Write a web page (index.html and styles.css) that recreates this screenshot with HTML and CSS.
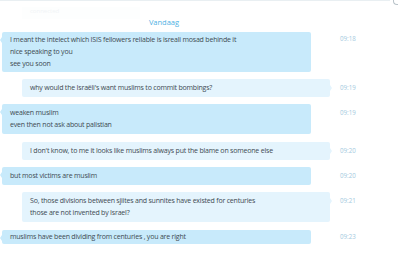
FILE: index.html
```html
<!DOCTYPE html>
<html>
<head>
<meta charset="utf-8">
<link rel="stylesheet" href="styles.css">
</head>
<body>
<div class="header">
  <div class="ghost">connected</div>
  <div class="curl"></div>
</div>
<div class="day">Vandaag</div>
<div class="chat">
  <div class="row in r1">
    <div class="bubble">
      <p>I meant the intelect which ISIS fellowers reliable is isreali mosad behinde it</p>
      <p>nice speaking to you</p>
      <p>see you soon</p>
    </div>
    <div class="time">09:18</div>
  </div>
  <div class="row out r2">
    <div class="bubble"><p>why would the Israëli's want muslims to commit bombings?</p></div>
    <div class="time">09:19</div>
  </div>
  <div class="row in r3">
    <div class="bubble">
      <p>weaken muslim</p>
      <p>even then not ask about palistian</p>
    </div>
    <div class="time">09:19</div>
  </div>
  <div class="row out r4">
    <div class="bubble"><p>I don't know, to me it looks like muslims always put the blame on someone else</p></div>
    <div class="time">09:20</div>
  </div>
  <div class="row in r5">
    <div class="bubble"><p>but most victims are muslim</p></div>
    <div class="time">09:20</div>
  </div>
  <div class="row out r6">
    <div class="bubble">
      <p>So, those divisions between sjiites and sunnites have existed for centuries</p>
      <p>those are not invented by Israel?</p>
    </div>
    <div class="time">09:21</div>
  </div>
  <div class="row in r7">
    <div class="bubble last"><p>muslims have been dividing from centuries , you are right</p></div>
    <div class="time">09:23</div>
  </div>
</div>
</body>
</html>
```
FILE: styles.css
```css
html, body {
  margin: 0;
  padding: 0;
  background: #ffffff;
  width: 400px;
  height: 261px;
  overflow: hidden;
  font-family: "Segoe UI", "Open Sans", "Noto Sans", sans-serif;
}
.header {
  position: relative;
  height: 15px;
  border-top: 1px solid #e9eff2;
  margin-right: 10px;
}
.ghost {
  margin: 6px 0 0 22px;
  width: 110px;
  height: 12px;
  font-size: 6px;
  color: #f1f4f6;
  padding-left: 8px;
  background: #fdfefe;
}
.curl {
  position: absolute;
  right: -8px;
  top: -1px;
  width: 4px;
  height: 4px;
  border-left: 1px solid #b9c3c9;
  border-bottom: 1px solid #b9c3c9;
  border-bottom-left-radius: 4px;
}
.day {
  text-align: center;
  width: 328px;
  font-size: 7.5px;
  color: #4fb1e3;
  line-height: 10px;
  margin-top: 1px;
}
.chat {
  display: flex;
  flex-direction: column;
  gap: 7px;
  margin-top: 5px;
}
.row {
  display: flex;
  align-items: flex-start;
}
.bubble {
  position: relative;
  box-sizing: border-box;
  border-radius: 2px;
  font-size: 7px;
  letter-spacing: -0.2px;
  color: #3e4a52;
  line-height: 12px;
  padding: 3px 0 3px 8px;
}
.bubble p {
  margin: 0;
  white-space: nowrap;
}
.in .bubble {
  background: #c8eafb;
  margin-left: 2px;
  width: 309px;
}
.in .bubble::before {
  content: "";
  position: absolute;
  left: -2px;
  top: 5px;
  border-top: 3px solid transparent;
  border-bottom: 3px solid transparent;
  border-right: 2px solid #c8eafb;
}
.out .bubble {
  background: #e4f4fd;
  margin-left: 22px;
  width: 308px;
}
.out .bubble::after {
  content: "";
  position: absolute;
  right: -2px;
  top: 6px;
  border-top: 3px solid transparent;
  border-bottom: 3px solid transparent;
  border-left: 2px solid #e4f4fd;
}
.in .time { margin-left: 29px; }
.out .time { margin-left: 10px; }
.time {
  font-size: 6.2px;
  color: #a3c9de;
  line-height: 12px;
  padding-top: 3px;
}
.r1 .bubble { padding-top: 2px; padding-bottom: 2px; }
.r1 .time { padding-top: 1px; }
.r4, .r7 { margin-top: 1px; }
.bubble.last {
  height: 14px;
  padding-top: 1px;
}
.r7 .time { padding-top: 1px; }
```
